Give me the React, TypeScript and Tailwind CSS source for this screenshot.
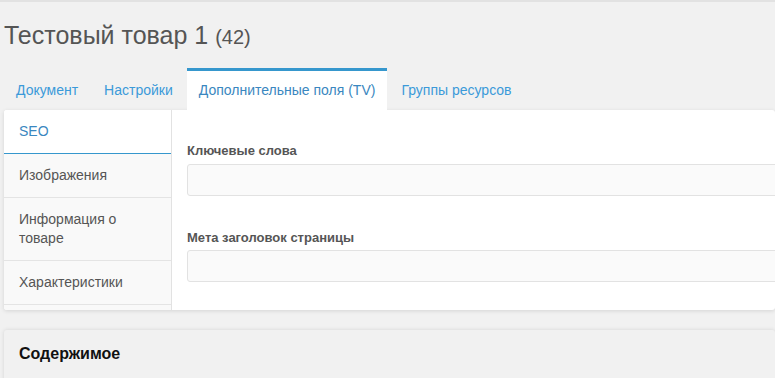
import React from "react";

export default function App() {
  const font = { fontFamily: '"Liberation Sans", Arial, sans-serif' };
  const vtabs = [
    { label: "SEO", active: true },
    { label: "Изображения" },
    { label: "Информация о товаре" },
    { label: "Характеристики" },
    { label: "" },
  ];
  return (
    <div className="w-[775px] h-[378px] overflow-hidden bg-[#f1f1f1] border-t-2 border-[#e2e2e2]" style={font}>
      <div className="pl-[4px]">
        <div className="h-[66px] flex items-center pt-[1px]">
          <h1 className="text-[25px] text-[#555] leading-none">
            Тестовый товар 1 <span className="text-[20px]">(42)</span>
          </h1>
        </div>
        <div className="flex h-[42px] items-end">
          {["Документ", "Настройки", "Дополнительные поля (TV)", "Группы ресурсов"].map((t, i) => (
            <div
              key={t}
              className={
                i === 2
                  ? "h-[42px] mr-[2px] px-3 flex items-center bg-white border-t-[3px] border-[#3697cd] text-[14px] text-[#3a87c0] pb-[1px]"
                  : "h-[42px] mr-[2px] px-3 flex items-center text-[14px] text-[#3b9ad9] pt-[3px] pb-[1px]"
              }
            >
              {t}
            </div>
          ))}
        </div>
        <div className="flex h-[200px] bg-white rounded-[3px] shadow-[0_1px_4px_rgba(0,0,0,0.12)] overflow-hidden">
          <div className="w-[168px] shrink-0 bg-[#f9f9f9] border-r border-[#e2e2e2] flex flex-col">
            {vtabs.map((v, i) => (
              <div
                key={i}
                className={
                  v.active
                    ? "bg-white px-[15px] py-3 leading-[19px] text-[14px] text-[#3a87c0] border-b border-[#3697cd]"
                    : "px-[15px] py-3 leading-[19px] text-[14px] text-[#555] border-b border-[#e4e4e4]"
                }
              >
                {v.label || "\u00a0"}
              </div>
            ))}
          </div>
          <div className="flex-1 pl-[15px] pt-[31px]">
            <div className="text-[13px] font-bold text-[#555] leading-[19px] mb-[4px]">Ключевые слова</div>
            <div className="h-[32px] -mr-[10px] bg-[#fafafa] border border-[#e2e2e2] rounded-[3px]" />
            <div className="mt-[32px] text-[13px] font-bold text-[#555] leading-[19px] mb-[3px]">Мета заголовок страницы</div>
            <div className="h-[32px] -mr-[10px] bg-[#fafafa] border border-[#e2e2e2] rounded-[3px]" />
          </div>
        </div>
        <div className="mt-[20px] h-[60px] bg-[#f1f1f1] rounded-[3px] shadow-[0_0_4px_rgba(0,0,0,0.12)] px-[15px] pt-[14px]">
          <div className="text-[16px] font-bold text-[#111] leading-[19px]">Содержимое</div>
        </div>
      </div>
    </div>
  );
}
